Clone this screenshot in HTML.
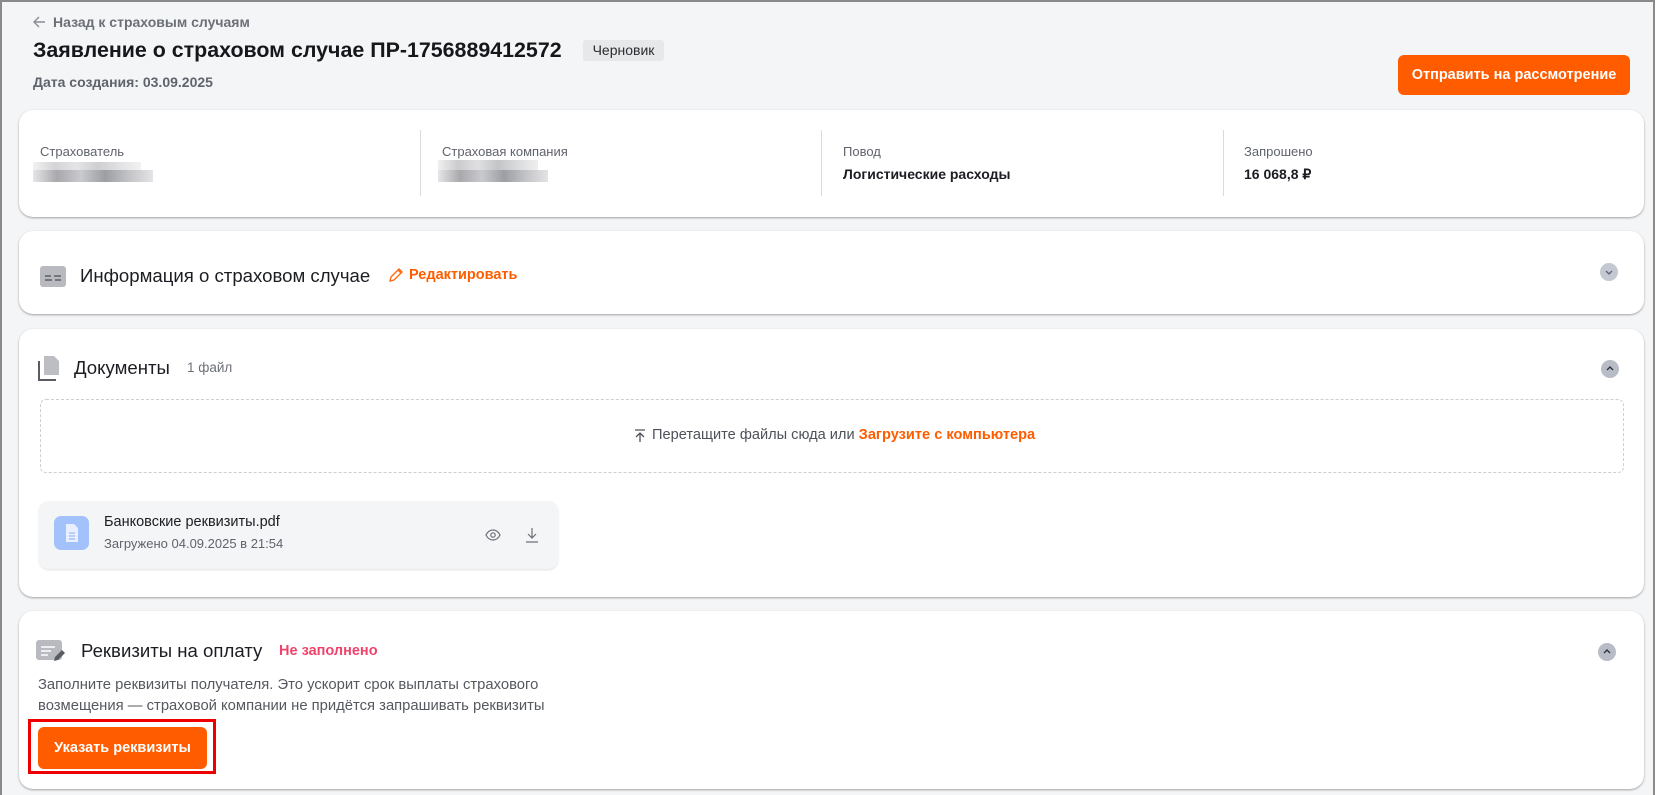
<!DOCTYPE html>
<html><head><meta charset="utf-8"><style>
*{box-sizing:border-box;margin:0;padding:0}
body{width:1658px;height:795px;background:#fff;font-family:"Liberation Sans",sans-serif;position:relative;overflow:hidden;color:#1b1d22}
.frame{position:absolute;left:0;top:0;width:1655px;height:795px;background:#f4f5f7;border:2px solid #8a8a8a;border-bottom:none}
.a{position:absolute;white-space:nowrap}
.card{position:absolute;left:19px;width:1625px;background:#fff;border-radius:14px;box-shadow:0 1px 2px rgba(0,0,0,.35)}
.lbl{font-size:13px;color:#5f636b}
.val{font-size:14px;font-weight:bold;color:#1b1d22}
.div{position:absolute;top:20px;width:1px;height:66px;background:#d9dbe0}
.chev{position:absolute;width:18px;height:18px;border-radius:50%;background:#c4c8d2}
.h{font-size:18.6px;color:#1b1d22}
.blur{position:absolute;height:12px;background:linear-gradient(90deg,#e6e6e8,#a9a9ad 20%,#c9cace 40%,#9d9ea3 60%,#c3c4c8 80%,#e4e4e6)}
</style></head><body>
<div class="frame"></div>

<svg class="a" style="left:32px;top:15px" width="14" height="14" viewBox="0 0 14 14"><path d="M13 7H2M7 2L2 7l5 5" fill="none" stroke="#8a8e96" stroke-width="1.4"/></svg>
<div class="a" style="left:53px;top:14px;font-size:14px;font-weight:bold;color:#6b6f78">Назад к страховым случаям</div>
<div class="a" style="left:33px;top:38px;font-size:21.4px;font-weight:bold;color:#15171b">Заявление о страховом случае ПР-1756889412572</div>
<div class="a" style="left:583px;top:40px;width:81px;height:21px;background:#e7e8ea;border-radius:3px;font-size:14px;line-height:21px;text-align:center;color:#2a2c30">Черновик</div>
<div class="a" style="left:33px;top:74px;font-size:14px;font-weight:bold;color:#5f636b">Дата создания: 03.09.2025</div>
<div class="a" style="left:1398px;top:55px;width:232px;height:40px;background:#ff5c00;border-radius:6px;color:#fff;font-size:14.5px;font-weight:bold;line-height:40px;text-align:center">Отправить на рассмотрение</div>

<div class="card" style="top:110px;height:107px">
  <div class="a lbl" style="left:21px;top:34px">Страхователь</div>
  <div class="blur" style="left:14px;top:52px;width:108px;height:8px;opacity:.5"></div>
  <div class="blur" style="left:14px;top:60px;width:120px"></div>
  <div class="div" style="left:401px"></div>
  <div class="a lbl" style="left:423px;top:34px">Страховая компания</div>
  <div class="blur" style="left:419px;top:50px;width:100px;opacity:.6"></div>
  <div class="blur" style="left:419px;top:60px;width:110px"></div>
  <div class="div" style="left:802px"></div>
  <div class="a lbl" style="left:824px;top:34px">Повод</div>
  <div class="a val" style="left:824px;top:56px">Логистические расходы</div>
  <div class="div" style="left:1204px"></div>
  <div class="a lbl" style="left:1225px;top:34px">Запрошено</div>
  <div class="a val" style="left:1225px;top:56px">16 068,8 ₽</div>
</div>

<div class="card" style="top:231px;height:83px">
  <svg class="a" style="left:21px;top:35px" width="26" height="21" viewBox="0 0 26 21"><rect width="26" height="21" rx="3" fill="#b9bac0"/><path d="M5 10h6M14 10h7M5 14h7M15 14h6" stroke="#5c5e66" stroke-width="1.6"/></svg>
  <div class="a h" style="left:61px;top:34px">Информация о страховом случае</div>
  <svg class="a" style="left:369px;top:36px" width="16" height="16" viewBox="0 0 16 16"><path d="M2 14l1-4 8-8 3 3-8 8-4 1zM10 3l3 3" fill="none" stroke="#ff6a13" stroke-width="1.4"/></svg>
  <div class="a" style="left:390px;top:36px;font-size:14.5px;font-weight:bold;color:#ff5c00">Редактировать</div>
  <div class="chev" style="left:1581px;top:32px"><svg width="18" height="18"><path d="M6 8l3 3 3-3" fill="none" stroke="#5b6170" stroke-width="1.3"/></svg></div>
</div>

<div class="card" style="top:329px;height:268px">
  <svg class="a" style="left:19px;top:26px" width="22" height="26" viewBox="0 0 22 26"><path d="M1 6v19h17" fill="none" stroke="#5a5c63" stroke-width="2"/><path d="M6 1h10l5 5v14H6z" fill="#bdbec4"/></svg>
  <div class="a h" style="left:55px;top:28px">Документы</div>
  <div class="a" style="left:168px;top:31px;font-size:13.5px;color:#6b6f78">1 файл</div>
  <div class="chev" style="left:1582px;top:31px;background:#b8bcc6"><svg width="18" height="18"><path d="M6 10l3-3 3 3" fill="none" stroke="#2f333c" stroke-width="1.4"/></svg></div>
  <div class="a" style="left:21px;top:70px;width:1584px;height:74px;border:1px dashed #ccced3;border-radius:6px"></div>
  <svg class="a" style="left:615px;top:100px" width="12" height="14" viewBox="0 0 12 14"><path d="M1 1h10M6 13V4M2 8l4-4 4 4" fill="none" stroke="#4e5159" stroke-width="1.3"/></svg>
  <div class="a" style="left:633px;top:98px;font-size:14.6px;color:#4e5159">Перетащите файлы сюда или <b style="color:#ff5c00">Загрузите с компьютера</b></div>
  <div class="a" style="left:20px;top:172px;width:519px;height:68px;background:#f4f5f7;border-radius:10px;box-shadow:0 1px 2px rgba(0,0,0,.12)"></div>
  <div class="a" style="left:35px;top:187px;width:35px;height:34px;background:#a3c1fb;border-radius:7px"><svg width="35" height="34"><path d="M12 8h8l4 4v14H12z" fill="#e8f0ff"/><path d="M15 17h6M15 20h6M15 23h6" stroke="#9fb9f5" stroke-width="1.2"/></svg></div>
  <div class="a" style="left:85px;top:185px;font-size:14.5px;color:#1b1d22">Банковские реквизиты.pdf</div>
  <div class="a" style="left:85px;top:207px;font-size:13px;color:#5f636b">Загружено 04.09.2025 в 21:54</div>
  <svg class="a" style="left:466px;top:199px" width="16" height="14" viewBox="0 0 16 14"><path d="M1 7c2-4 5-5 7-5s5 1 7 5c-2 4-5 5-7 5s-5-1-7-5z" fill="none" stroke="#6b6f78" stroke-width="1.2"/><circle cx="8" cy="7" r="2.2" fill="none" stroke="#6b6f78" stroke-width="1.2"/></svg>
  <svg class="a" style="left:506px;top:198px" width="14" height="16" viewBox="0 0 14 16"><path d="M7 1v10M3 7l4 4 4-4M1 15h12" fill="none" stroke="#6b6f78" stroke-width="1.2"/></svg>
</div>

<div class="card" style="top:611px;height:178px">
  <svg class="a" style="left:17px;top:29px" width="30" height="23" viewBox="0 0 30 23"><rect width="26" height="20" rx="3" fill="#b9bac0"/><path d="M5 7h14M5 11h10M5 15h7" stroke="#fff" stroke-width="1.6"/><path d="M18 21l1-4 7-7 3 3-7 7z" fill="#5a5c63"/></svg>
  <div class="a h" style="left:62px;top:29px">Реквизиты на оплату</div>
  <div class="a" style="left:260px;top:32px;font-size:14.5px;font-weight:bold;color:#f0436b">Не заполнено</div>
  <div class="chev" style="left:1579px;top:32px;background:#b8bcc6"><svg width="18" height="18"><path d="M6 10l3-3 3 3" fill="none" stroke="#2f333c" stroke-width="1.4"/></svg></div>
  <div class="a" style="left:19px;top:64px;font-size:14.8px;line-height:21px;color:#55585f">Заполните реквизиты получателя. Это ускорит срок выплаты страхового<br>возмещения — страховой компании не придётся запрашивать реквизиты</div>
</div>
<div class="a" style="left:28px;top:719px;width:188px;height:55px;border:3px solid #ee0000"></div>
<div class="a" style="left:38px;top:727px;width:169px;height:42px;background:#ff5c00;border-radius:6px;color:#fff;font-size:14.5px;font-weight:bold;line-height:42px;text-align:center">Указать реквизиты</div>
</body></html>
